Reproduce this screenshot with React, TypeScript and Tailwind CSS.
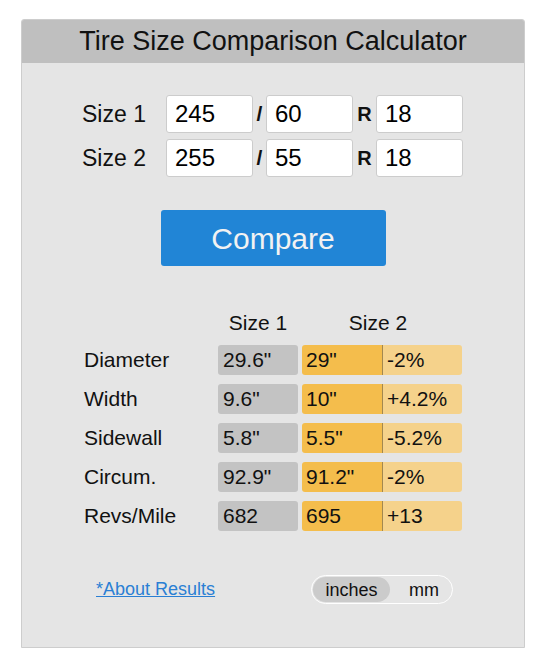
import React, { useState } from "react";

const rows = [
  { label: "Diameter", s1: '29.6"', s2: '29"', diff: "-2%" },
  { label: "Width", s1: '9.6"', s2: '10"', diff: "+4.2%" },
  { label: "Sidewall", s1: '5.8"', s2: '5.5"', diff: "-5.2%" },
  { label: "Circum.", s1: '92.9"', s2: '91.2"', diff: "-2%" },
  { label: "Revs/Mile", s1: "682", s2: "695", diff: "+13" },
];

const SizeInput: React.FC<{ value: string }> = ({ value }) => (
  <input
    type="text"
    defaultValue={value}
    className="w-[87px] h-[38px] bg-white border border-[#cccccc] rounded-[3px] pl-2 text-[24px] text-black outline-none"
  />
);

const App: React.FC = () => {
  const [unit, setUnit] = useState("inches");

  return (
    <div className="w-[546px] h-[667px] bg-white pt-[19px] font-['Liberation_Sans',Arial,sans-serif] text-[#111]">
      <div className="mx-auto w-[504px] h-[629px] bg-[#e5e5e5] border border-[#cdcdcd] rounded-t-[3px] flex flex-col">
        <div className="h-[43px] bg-[#bfbfbf] flex items-center justify-center text-[27px] text-[#111] rounded-t-[2px]">
          Tire Size Comparison Calculator
        </div>

        {/* inputs */}
        <div className="flex flex-col gap-[6px] mt-[32px] pl-[60px]">
          {[
            ["Size 1", "245", "60", "18"],
            ["Size 2", "255", "55", "18"],
          ].map(([label, w, a, r]) => (
            <div key={label} className="flex items-center">
              <span className="w-[84px] text-[23px]">{label}</span>
              <SizeInput value={w} />
              <span className="w-[13px] text-center text-[21px] font-bold">/</span>
              <SizeInput value={a} />
              <span className="w-[23px] text-center text-[20px] font-bold">R</span>
              <SizeInput value={r} />
            </div>
          ))}
        </div>

        <div className="flex justify-center mt-[33px]">
          <button className="w-[225px] h-[56px] bg-[#2185d6] rounded-[3px] text-[#f2f2f2] text-[30px]">
            Compare
          </button>
        </div>

        {/* results */}
        <div className="mt-[44px] pl-[62px]">
          <div className="flex h-[26px] items-center text-[21px]">
            <span className="w-[134px]" />
            <span className="w-[80px] text-center">Size 1</span>
            <span className="w-[160px] text-center">Size 2</span>
          </div>
          <div className="flex flex-col gap-[9px] mt-[9px]">
            {rows.map((row) => (
              <div key={row.label} className="flex items-center h-[30px] text-[21px]">
                <span className="w-[134px]">{row.label}</span>
                <div className="w-[80px] h-[30px] bg-[#c3c3c3] rounded-[3px] flex items-center pl-[5px]">
                  {row.s1}
                </div>
                <div className="ml-[4px] w-[160px] h-[30px] rounded-[3px] flex overflow-hidden">
                  <div className="w-[81px] bg-[#f4bd4c] border-r border-[#a3884f] flex items-center pl-[4px]">
                    {row.s2}
                  </div>
                  <div className="flex-1 bg-[#f5d28b] flex items-center pl-[4px]">{row.diff}</div>
                </div>
              </div>
            ))}
          </div>
        </div>

        {/* footer */}
        <div className="flex items-center justify-between mt-[44px] pl-[74px] pr-[71px]">
          <a href="#" className="text-[18px] text-[#2a7fd4] underline">
            *About Results
          </a>
          <div className="w-[142px] h-[29px] rounded-full border border-white flex items-center p-[1px] text-[18px]">
            <button
              onClick={() => setUnit("inches")}
              className={
                unit === "inches"
                  ? "w-[77px] h-full rounded-full bg-[#cbcbcb] text-[#111]"
                  : "w-[77px] h-full rounded-full text-[#111]"
              }
            >
              inches
            </button>
            <button
              onClick={() => setUnit("mm")}
              className={
                unit === "mm"
                  ? "flex-1 h-full rounded-full bg-[#cbcbcb] text-[#111] pl-[7px]"
                  : "flex-1 h-full rounded-full text-[#111] pl-[7px]"
              }
            >
              mm
            </button>
          </div>
        </div>
      </div>
    </div>
  );
};

export default App;
